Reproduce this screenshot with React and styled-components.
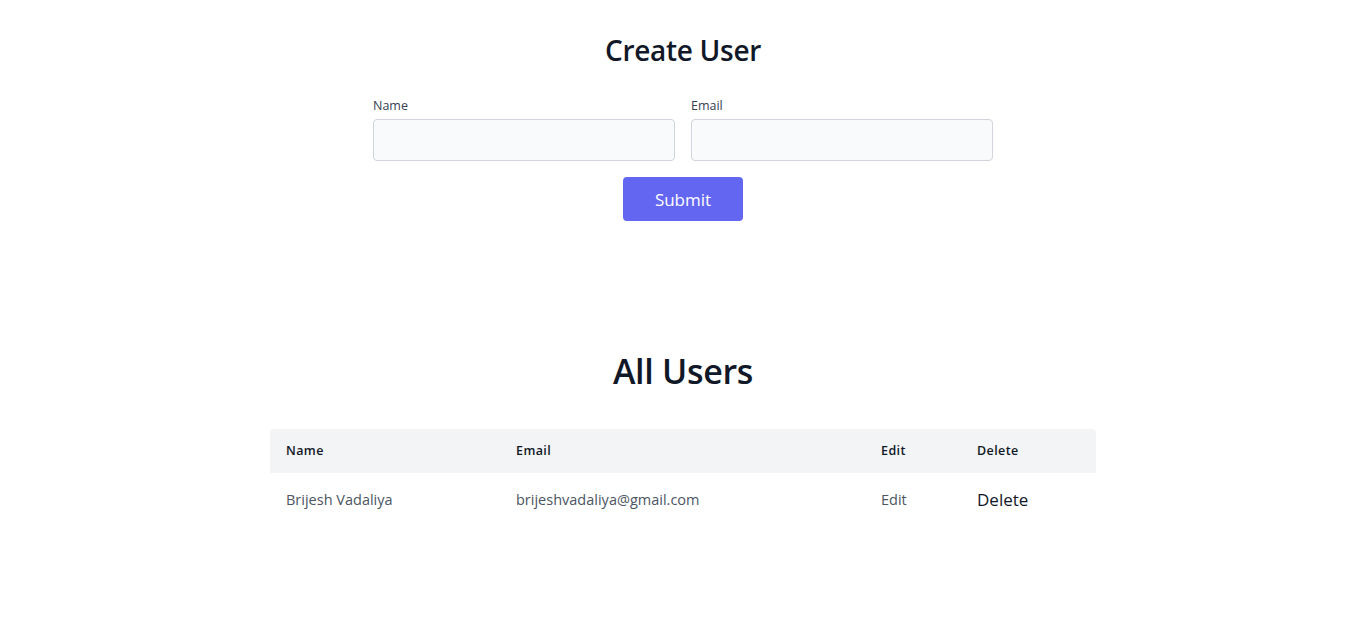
import React from "react";
import styled, { createGlobalStyle } from "styled-components";

const Global = createGlobalStyle`
  html, body { margin: 0; padding: 0; background: #fff; }
  body { font-family: "Open Sans", "Noto Sans", sans-serif; color: #111827; }
  * { box-sizing: border-box; }
`;

const Page = styled.div`
  display: flex;
  flex-direction: column;
  align-items: center;
  padding-top: 32px;
`;

const Title = styled.h1`
  margin: 0;
  font-size: ${(p) => p.$size}px;
  font-weight: 600;
  line-height: 1.3;
  color: #111827;
  letter-spacing: -0.3px;
`;

const Form = styled.form`
  width: 620px;
  margin-top: 30px;
  display: flex;
  flex-direction: column;
  align-items: center;
`;

const Fields = styled.div`
  width: 100%;
  display: grid;
  grid-template-columns: 1fr 1fr;
  gap: 16px;
`;

const Field = styled.label`
  display: flex;
  flex-direction: column;
  gap: 5px;
`;

const Label = styled.span`
  font-size: 12.5px;
  color: #374151;
  line-height: 16px;
`;

const Input = styled.input`
  height: 42px;
  width: 100%;
  background: #f9fafb;
  border: 1px solid #d1d5db;
  border-radius: 4px;
  padding: 0 12px;
  font: inherit;
`;

const Button = styled.button`
  margin-top: 16px;
  width: 120px;
  height: 44px;
  background: #6366f1;
  color: #fff;
  border: none;
  border-radius: 4px;
  font-family: inherit;
  font-size: 17px;
`;

const Section = styled.div`
  margin-top: 128px;
  display: flex;
  flex-direction: column;
  align-items: center;
`;

const Table = styled.table`
  margin-top: 35px;
  width: 826px;
  border-collapse: collapse;
  table-layout: fixed;
`;

const HeadRow = styled.tr`
  background: #f3f4f6;
  height: 44px;
`;

const Th = styled.th`
  text-align: left;
  padding: 0 16px;
  font-size: 12.5px;
  font-weight: 600;
  letter-spacing: 0.4px;
  color: #111827;
  &:first-child { border-top-left-radius: 4px; }
  &:last-child { border-top-right-radius: 4px; }
`;

const Row = styled.tr`
  height: 53px;
`;

const Td = styled.td`
  padding: 0 16px;
  font-size: ${(p) => p.$size || 14.5}px;
  color: ${(p) => p.$color || "#4b5563"};
  white-space: nowrap;
`;

const EditLink = styled.a`
  color: #4b5563;
  text-decoration: none;
`;

const DeleteBtn = styled.button`
  background: none;
  border: none;
  padding: 0;
  font-family: inherit;
  font-size: 17px;
  color: #111827;
`;

export default function App() {
  return (
    <>
      <Global />
      <Page>
        <Title $size={28}>Create User</Title>
        <Form onSubmit={(e) => e.preventDefault()}>
          <Fields>
            <Field>
              <Label>Name</Label>
              <Input type="text" />
            </Field>
            <Field>
              <Label>Email</Label>
              <Input type="email" />
            </Field>
          </Fields>
          <Button type="submit">Submit</Button>
        </Form>
        <Section>
          <Title $size={34}>All Users</Title>
          <Table>
            <colgroup>
              <col style={{ width: 230 }} />
              <col style={{ width: 365 }} />
              <col style={{ width: 96 }} />
              <col style={{ width: 135 }} />
            </colgroup>
            <thead>
              <HeadRow>
                <Th>Name</Th>
                <Th>Email</Th>
                <Th>Edit</Th>
                <Th>Delete</Th>
              </HeadRow>
            </thead>
            <tbody>
              <Row>
                <Td>Brijesh Vadaliya</Td>
                <Td>brijeshvadaliya@gmail.com</Td>
                <Td>
                  <EditLink href="#">Edit</EditLink>
                </Td>
                <Td>
                  <DeleteBtn>Delete</DeleteBtn>
                </Td>
              </Row>
            </tbody>
          </Table>
        </Section>
      </Page>
    </>
  );
}
